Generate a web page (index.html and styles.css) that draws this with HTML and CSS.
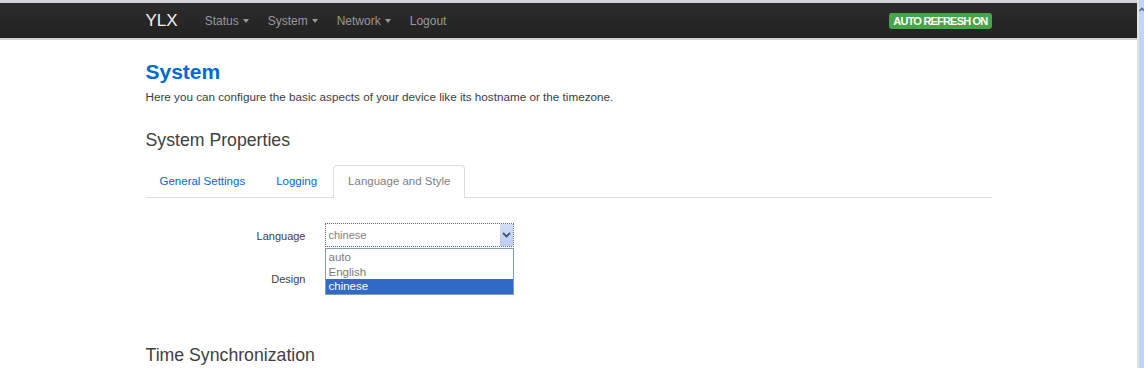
FILE: index.html
```html
<!DOCTYPE html>
<html lang="en">

<head>
    <meta charset="UTF-8">
    <meta name="viewport" content="width=device-width, initial-scale=1.0">
    <title>System - YLX</title>
    <link rel="stylesheet" href="styles.css">
</head>

<body>
    <div class="page">
        <div class="topline"></div>
        <div class="navbar">
            <div class="container nav-inner">
                <div class="nav-left">
                    <a class="brand" href="#">YLX</a>
                    <ul class="nav">
                        <li><a href="#">Status<span class="caret"></span></a></li>
                        <li><a href="#">System<span class="caret"></span></a></li>
                        <li><a href="#">Network<span class="caret"></span></a></li>
                        <li><a href="#">Logout</a></li>
                    </ul>
                </div>
                <span class="badge">AUTO REFRESH ON</span>
            </div>
        </div>

        <div class="container content">
            <h2 class="page-title">System</h2>
            <p class="desc">Here you can configure the basic aspects of your device like its hostname or the timezone.</p>

            <h3 class="section-title">System Properties</h3>
            <ul class="tabs">
                <li><a href="#">General Settings</a></li>
                <li><a href="#">Logging</a></li>
                <li class="active"><a href="#">Language and Style</a></li>
            </ul>

            <div class="form">
                <div class="form-row">
                    <label class="control-label">Language</label>
                    <div class="select focused">
                        <span class="select-value">chinese</span>
                        <span class="select-arrow">
                            <svg width="9" height="6" viewBox="0 0 9 6">
                                <path d="M1 1 L4.5 4.5 L8 1" fill="none" stroke="#3f5577" stroke-width="1.8"/>
                            </svg>
                        </span>
                        <ul class="dropdown">
                            <li>auto</li>
                            <li>English</li>
                            <li class="selected">chinese</li>
                        </ul>
                    </div>
                </div>
                <div class="form-row">
                    <label class="control-label">Design</label>
                    <div class="select"></div>
                </div>
            </div>

            <h3 class="section-title time-sync">Time Synchronization</h3>
        </div>
    </div>
    <div class="scrollbar">
        <span class="scroll-up">
            <svg width="6" height="5" viewBox="0 0 6 5">
                <path d="M0.5 4 L3 1.2 L5.5 4" fill="none" stroke="#4d6185" stroke-width="1.4"/>
            </svg>
        </span>
    </div>
</body>

</html>
```

FILE: styles.css
```css
body {
    margin: 0;
    display: flex;
    height: 368px;
    overflow: hidden;
    font-family: "Liberation Sans", Arial, sans-serif;
    background-color: #fff;
    color: #404040;
}

.page {
    flex: 1;
}

.container {
    width: 846px;
    margin: 0 auto;
}

.topline {
    height: 3px;
    background-color: #d3d3da;
}

.navbar {
    height: 35px;
    background: linear-gradient(#2c2c2c, #222);
    border-bottom: 2px solid #cfcfcf;
}

.nav-inner {
    height: 35px;
    display: flex;
    align-items: center;
    justify-content: space-between;
}

.nav-left {
    display: flex;
    align-items: center;
}

.brand {
    color: #f2f2f2;
    font-size: 17px;
    text-decoration: none;
    margin-right: 27px;
}

.nav {
    list-style: none;
    margin: 0;
    padding: 0;
    display: flex;
    gap: 19px;
}

.nav a {
    color: #999;
    font-size: 12px;
    text-decoration: none;
    display: flex;
    align-items: center;
}

.caret {
    display: inline-block;
    width: 0;
    height: 0;
    margin-left: 4px;
    margin-top: 1px;
    border-left: 3px solid transparent;
    border-right: 3px solid transparent;
    border-top: 4px solid #999;
}

.badge {
    background-color: #46a546;
    color: #fff;
    font-size: 11px;
    font-weight: bold;
    line-height: 16px;
    padding: 0 4px;
    border-radius: 3px;
    letter-spacing: -0.8px;
}

.content {
    padding-top: 20px;
}

.page-title {
    margin: 0;
    font-size: 21px;
    line-height: 24px;
    color: #0069d6;
}

.desc {
    margin: 5px 0 0;
    font-size: 11.7px;
    line-height: 16px;
}

.section-title {
    margin: 23px 0 0;
    font-size: 17.7px;
    line-height: 24px;
    font-weight: normal;
}

.tabs {
    list-style: none;
    margin: 13px 0 0;
    padding: 0;
    display: flex;
    border-bottom: 1px solid #ddd;
}

.tabs li {
    margin-right: 1px;
    margin-bottom: -1px;
}

.tabs li:first-child {
    margin-left: -1px;
}

.tabs a {
    display: block;
    height: 31px;
    line-height: 31px;
    padding: 0 14px;
    font-size: 11.5px;
    color: #0069d6;
    text-decoration: none;
    border: 1px solid transparent;
    border-bottom: none;
    border-radius: 4px 4px 0 0;
}

.tabs .active a {
    color: #808080;
    background-color: #fff;
    border-color: #ddd;
    height: 32px;
}

.form {
    margin-top: 25px;
}

.form-row {
    display: flex;
    align-items: flex-start;
    margin-bottom: 18px;
}

.control-label {
    width: 160px;
    text-align: right;
    font-size: 11px;
    line-height: 24px;
    padding-top: 1px;
    margin-right: 19px;
}

.select {
    position: relative;
    width: 187px;
    height: 22px;
    border: 1px solid #b5b5b5;
    display: flex;
    align-items: center;
    justify-content: space-between;
    background-color: #fff;
}

.select.focused {
    border: 1px dotted #666;
}

.select-value {
    font-size: 11px;
    color: #808080;
    padding-left: 3px;
}

.select-arrow {
    width: 13px;
    height: 22px;
    background: linear-gradient(#d3def5, #bccdf0);
    display: flex;
    align-items: center;
    justify-content: center;
}

.dropdown {
    position: absolute;
    top: 24px;
    left: -1px;
    width: 187px;
    list-style: none;
    margin: 0;
    padding: 0;
    border: 1px solid #7f9db9;
    background-color: #fff;
    z-index: 2;
}

.dropdown li {
    font-size: 11.5px;
    line-height: 14.5px;
    padding-left: 3px;
    color: #7a7a7a;
}

.dropdown li:first-child {
    padding-top: 1px;
}

.dropdown .selected {
    background-color: #316ac5;
    color: #fff;
}

.time-sync {
    margin-top: 52px;
}

.scrollbar {
    width: 5px;
    border-left: 2px solid #e4e4e4;
    background-color: #c4d4f7;
    padding-top: 7px;
}

.scroll-up {
    display: block;
    line-height: 0;
}
```
